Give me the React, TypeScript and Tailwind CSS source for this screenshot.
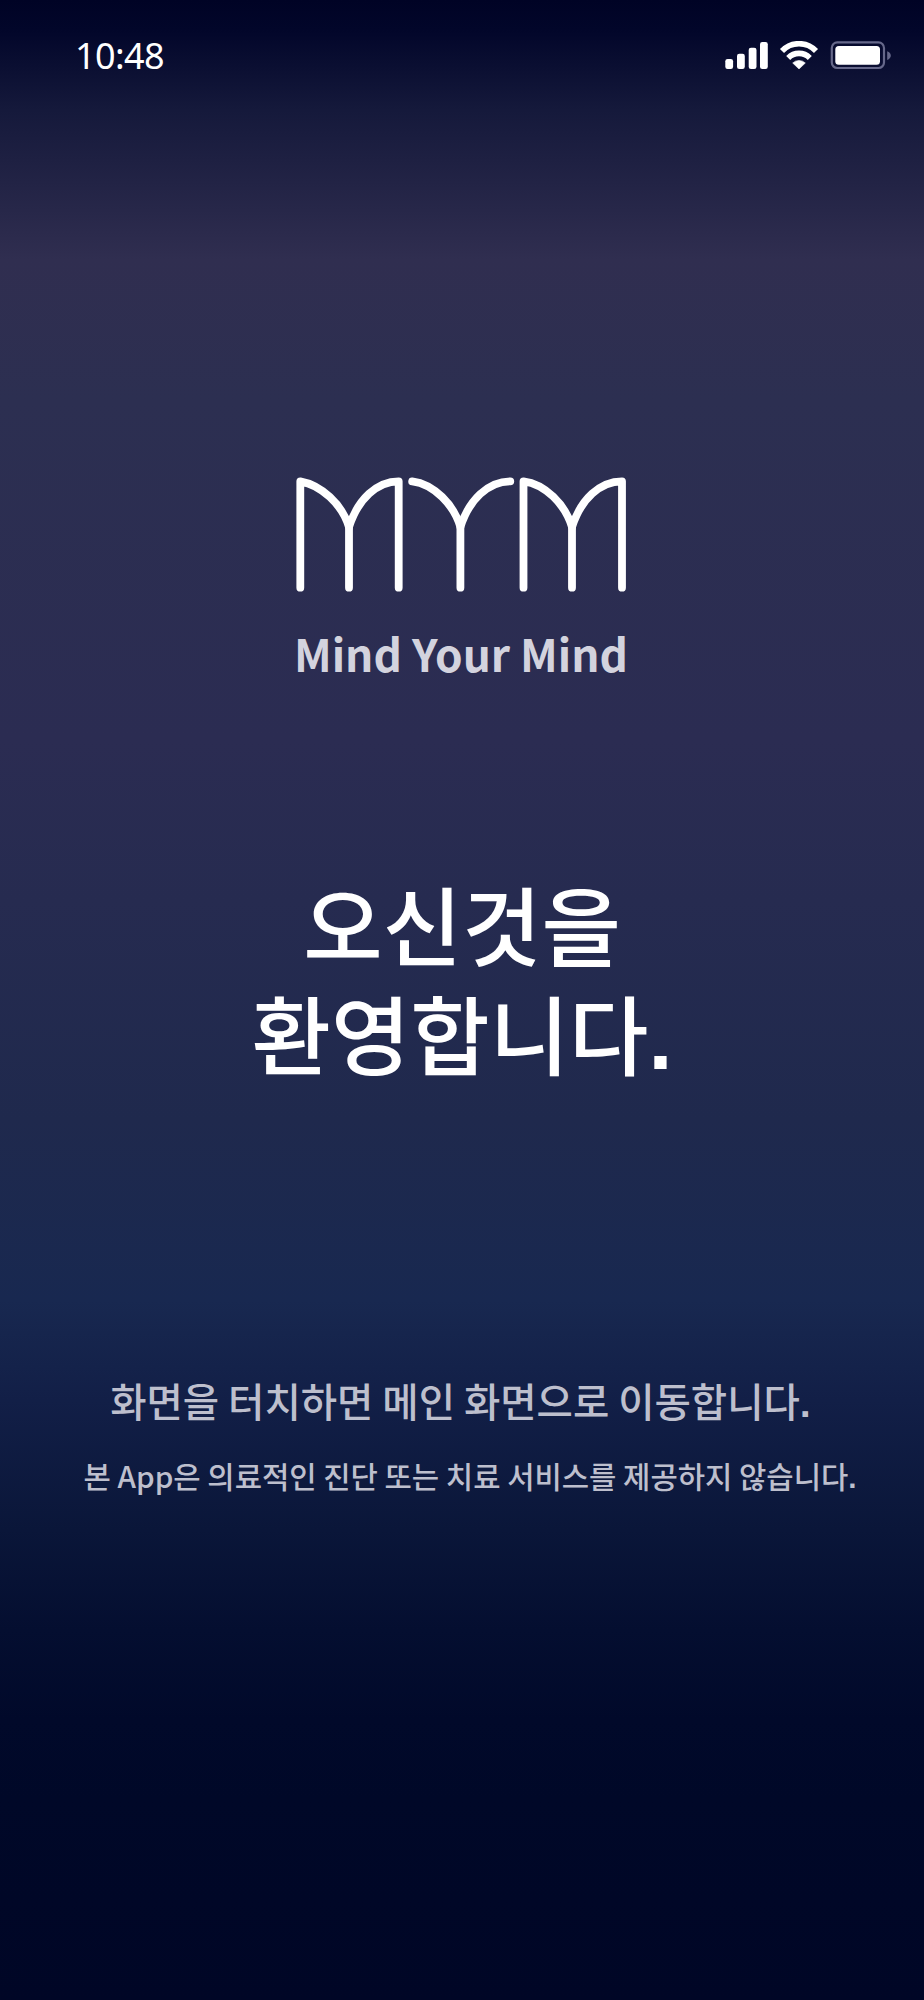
const logoStrokes = [
  "M4.3 111.7V5.3C25 9 46 28 53 51",
  "M53 111.7V51C62 23 81 5.3 102.7 5.3V111.7",
  "M116.2 5.3C138 8 158 29 164.4 51V111.7",
  "M164.4 51C173 24 192 5.3 214.3 5.3",
  "M227.5 111.7V5.3C249 8 269 28 276 51",
  "M276 111.7V51C285 23 304 5.3 326 5.3V111.7",
];

function StatusBar() {
  return (
    <header className="flex h-[112px] items-center justify-between pr-[32px] pl-[75px]">
      <time className="font-['Noto_Sans'] text-[36px] leading-none tracking-[-0.6px] text-white">10:48</time>
      <div className="flex items-center gap-[11px]">
        <svg className="h-[28px] w-[44px]" viewBox="0 0 44 28" fill="white">
          <rect x="1.3" y="17" width="7.8" height="10" rx="2.3" />
          <rect x="13" y="11.7" width="7.8" height="15.3" rx="2.3" />
          <rect x="24.7" y="5.7" width="7.8" height="21.3" rx="2.3" />
          <rect x="36" y="0" width="7.8" height="27" rx="2.3" />
        </svg>
        <svg className="h-[30px] w-[40px]" viewBox="0 0 40 30" fill="none" stroke="white" strokeWidth="5.6">
          <path d="M3 10A23.4 23.4 0 0 1 37 10" />
          <path d="M9.2 17A15 15 0 0 1 30.8 17" />
          <path d="M13.7 22A9 9 0 0 1 26.3 22L20 28Z" fill="white" stroke="white" strokeWidth="0.6" strokeLinejoin="round" />
        </svg>
        <svg className="h-[30px] w-[62px]" viewBox="0 0 62 30">
          <rect x="1.8" y="1.4" width="52.2" height="25.6" rx="5.5" fill="none" stroke="#66688a" strokeWidth="2.2" />
          <rect x="5.3" y="5" width="44.7" height="18.7" rx="3.5" fill="white" />
          <path d="M57.2 10.3C62 12 62 17.3 57.2 19Z" fill="#66688a" />
        </svg>
      </div>
    </header>
  );
}

function Period() {
  return <span className="font-['Liberation_Sans'] font-bold">.</span>;
}

export default function App() {
  return (
    <main className="flex h-[2000px] w-[924px] flex-col overflow-hidden bg-[linear-gradient(180deg,#000325_0px,#02062a_30px,#15193b_110px,#302e50_260px,#2c2f51_400px,#2b2c52_740px,#262b50_900px,#1f294d_1120px,#182850_1300px,#121f47_1400px,#0a1639_1530px,#040e30_1630px,#01092a_1720px,#000828_1800px,#000626_2000px)] font-['Noto_Sans_CJK_KR',sans-serif]">
      <StatusBar />
      <section className="mt-[364px] flex flex-col items-center">
        <svg className="h-[116px] w-[332px]" viewBox="0 0 332 116" fill="none" stroke="white" strokeWidth="7.8" strokeLinecap="round" strokeLinejoin="round">
          {logoStrokes.map((d) => (
            <path key={d} d={d} />
          ))}
        </svg>
        <p className="mt-[29px] mr-[2px] text-[44.2px] leading-[64px] font-bold whitespace-nowrap text-[#d3d3de]">Mind Your Mind</p>
      </section>
      <h1 className="mt-[183px] text-center text-[86.3px] leading-[109px] font-medium text-white">
        <span className="block">오신것을</span>
        <span className="block">환영합니다<Period /></span>
      </h1>
      <section className="mt-[278px] flex flex-col items-center whitespace-nowrap text-[#bdbfcd]">
        <p className="mr-[3px] text-[39.5px] leading-[56px] font-medium">화면을 터치하면 메인 화면으로 이동합니다<Period /></p>
        <p className="mt-[23px] ml-[16px] text-[29.7px] leading-[44px] font-medium">본 App은 의료적인 진단 또는 치료 서비스를 제공하지 않습니다<Period /></p>
      </section>
    </main>
  );
}
